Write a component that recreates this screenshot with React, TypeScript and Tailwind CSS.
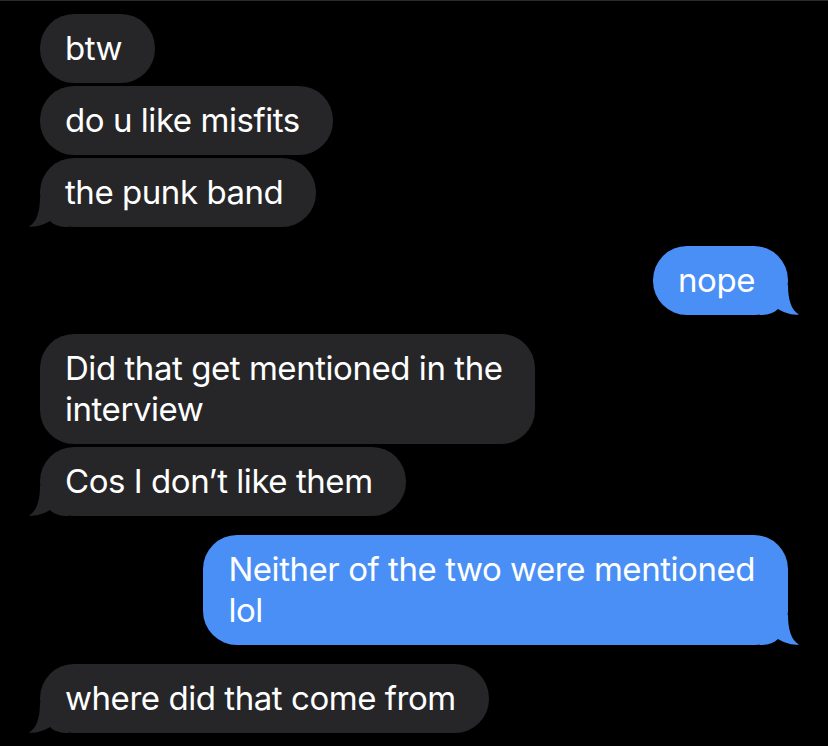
const messages = [
  { id: 1, from: "them", group: 1, lines: ["btw"] },
  { id: 2, from: "them", group: 1, lines: ["do u like misfits"] },
  { id: 3, from: "them", group: 1, lines: ["the punk band"], tail: true },
  { id: 4, from: "me", group: 2, lines: ["nope"], tail: true },
  { id: 5, from: "them", group: 3, lines: ["Did that get mentioned in the", "interview"] },
  { id: 6, from: "them", group: 3, lines: ["Cos I don’t like them"], tail: true },
  { id: 7, from: "me", group: 4, lines: ["Neither of the two were mentioned", "lol"], tail: true },
  { id: 8, from: "them", group: 5, lines: ["where did that come from"], tail: true },
];

function Tail({ side, color }: { side: "left" | "right"; color: string }) {
  return (
    <svg
      viewBox="0 0 40 30"
      className={
        side === "left"
          ? "absolute bottom-0 left-[-12px] w-[40px] h-[30px]"
          : "absolute bottom-0 right-[-12px] w-[40px] h-[30px] -scale-x-100"
      }
    >
      <path d="M12 0 C12 14 9 25 1 29.5 C9 30.5 17 27 22 24 C26 28 32 30 40 30 L40 0 Z" fill={color} />
    </svg>
  );
}

function Bubble({ from, lines, tail }: { from: string; lines: string[]; tail?: boolean }) {
  const mine = from === "me";
  const color = mine ? "#4a8ff6" : "#262629";
  return (
    <div className={mine ? "flex justify-end" : "flex justify-start"}>
      <div
        className={
          "relative rounded-[34px] pl-[25px] pr-[33px] py-[14px] text-[33px] leading-[41px] tracking-[-0.45px] text-white whitespace-nowrap " +
          (mine ? "bg-[#4a8ff6]" : "bg-[#262629]")
        }
      >
        {tail && <Tail side={mine ? "right" : "left"} color={color} />}
        <div className="relative">
          {lines.map((l) => (
            <div key={l}>{l}</div>
          ))}
        </div>
      </div>
    </div>
  );
}

export default function App() {
  const groups: (typeof messages)[] = [];
  messages.forEach((m) => {
    const last = groups[groups.length - 1];
    if (last && last[0].group === m.group) last.push(m);
    else groups.push([m]);
  });

  return (
    <div
      className="w-[828px] h-[746px] overflow-hidden bg-black border-t border-[#2a2a2c] px-[40px] pt-[13px] flex flex-col gap-[19px]"
      style={{ fontFamily: "Inter, 'Noto Sans', sans-serif" }}
    >
      {groups.map((g) => (
        <div key={g[0].group} className="flex flex-col gap-[3px]">
          {g.map((m) => (
            <Bubble key={m.id} from={m.from} lines={m.lines} tail={m.tail} />
          ))}
        </div>
      ))}
    </div>
  );
}
